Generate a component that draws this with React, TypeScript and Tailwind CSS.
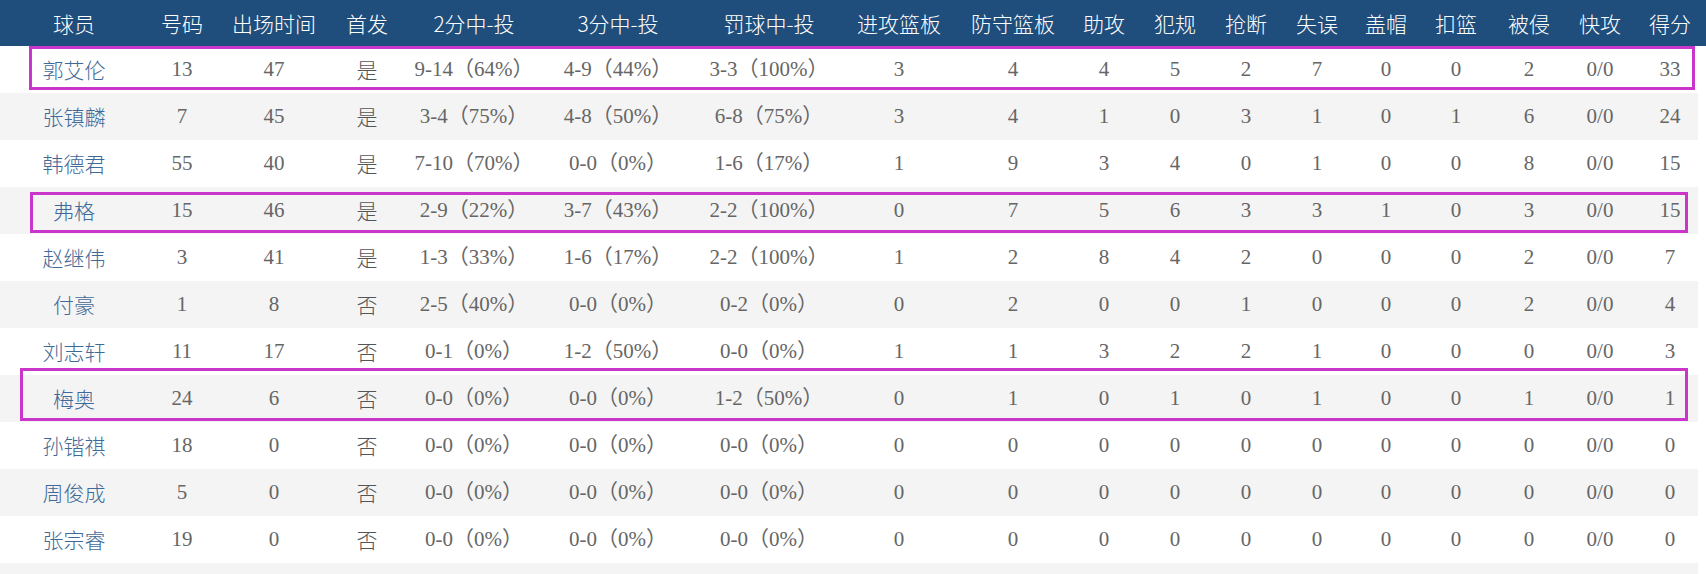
import React from "react";

const headers = ["球员","号码","出场时间","首发","2分中-投","3分中-投","罚球中-投","进攻篮板","防守篮板","助攻","犯规","抢断","失误","盖帽","扣篮","被侵","快攻","得分"];

const rows: string[][] = [
  ["郭艾伦","13","47","是","9-14（64%）","4-9（44%）","3-3（100%）","3","4","4","5","2","7","0","0","2","0/0","33"],
  ["张镇麟","7","45","是","3-4（75%）","4-8（50%）","6-8（75%）","3","4","1","0","3","1","0","1","6","0/0","24"],
  ["韩德君","55","40","是","7-10（70%）","0-0（0%）","1-6（17%）","1","9","3","4","0","1","0","0","8","0/0","15"],
  ["弗格","15","46","是","2-9（22%）","3-7（43%）","2-2（100%）","0","7","5","6","3","3","1","0","3","0/0","15"],
  ["赵继伟","3","41","是","1-3（33%）","1-6（17%）","2-2（100%）","1","2","8","4","2","0","0","0","2","0/0","7"],
  ["付豪","1","8","否","2-5（40%）","0-0（0%）","0-2（0%）","0","2","0","0","1","0","0","0","2","0/0","4"],
  ["刘志轩","11","17","否","0-1（0%）","1-2（50%）","0-0（0%）","1","1","3","2","2","1","0","0","0","0/0","3"],
  ["梅奥","24","6","否","0-0（0%）","0-0（0%）","1-2（50%）","0","1","0","1","0","1","0","0","1","0/0","1"],
  ["孙锴祺","18","0","否","0-0（0%）","0-0（0%）","0-0（0%）","0","0","0","0","0","0","0","0","0","0/0","0"],
  ["周俊成","5","0","否","0-0（0%）","0-0（0%）","0-0（0%）","0","0","0","0","0","0","0","0","0","0/0","0"],
  ["张宗睿","19","0","否","0-0（0%）","0-0（0%）","0-0（0%）","0","0","0","0","0","0","0","0","0","0/0","0"],
];

const cols = "grid grid-cols-[148px_68px_116px_70px_144px_144px_158px_102px_126px_56px_86px_56px_86px_52px_88px_58px_84px_56px]";
const font = "font-['Liberation_Serif','Noto_Sans_CJK_SC',serif]";

export default function App() {
  return (
    <div className="relative w-[1706px] h-[574px] overflow-hidden bg-white">
      <div className={`${cols} h-[46px] w-[1706px] items-center bg-[#1f4e7c] text-white text-[21px] font-['Noto_Sans_CJK_SC',sans-serif] font-light`}>
        {headers.map((h) => (
          <div key={h} className="text-center whitespace-nowrap leading-none">
            {h}
          </div>
        ))}
      </div>
      {rows.map((r, i) => (
        <div
          key={r[0]}
          className={`${cols} h-[47px] w-[1698px] items-center text-[21px] ${i % 2 === 1 ? "bg-[#f4f4f4]" : "bg-white"}`}
        >
          {r.map((c, j) => (
            <div
              key={j}
              className={
                j === 0
                  ? "text-center whitespace-nowrap text-[#3f6a98] font-['Noto_Sans_CJK_SC',sans-serif] font-light"
                  : j === 3
                  ? "text-center whitespace-nowrap text-[#555] font-['Noto_Sans_CJK_SC',sans-serif] font-light"
                  : `text-center whitespace-nowrap text-[#666] ${font}`
              }
            >
              {c}
            </div>
          ))}
        </div>
      ))}
      <div className="h-[47px] w-[1698px] bg-[#f4f4f4]" />
      <div className="absolute left-[29px] top-[46px] w-[1666px] h-[44px] border-[3px] border-[#c936c9]" />
      <div className="absolute left-[30px] top-[192px] w-[1658px] h-[41px] border-[3px] border-[#c936c9]" />
      <div className="absolute left-[20px] top-[368px] w-[1668px] h-[53px] border-[3px] border-[#c936c9]" />
    </div>
  );
}
